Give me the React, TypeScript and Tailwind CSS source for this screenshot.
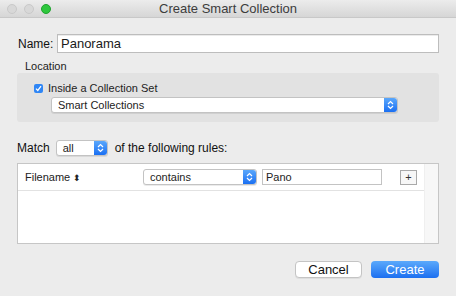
import React from "react";

function Stepper({ className = "" }: { className?: string }) {
  return (
    <div
      className={
        "flex h-full w-[13px] items-center justify-center rounded-r-[3px] bg-gradient-to-b from-[#5aa7fb] to-[#1a6ff2] " +
        className
      }
    >
      <svg width="7" height="10" viewBox="0 0 7 10" fill="none">
        <path d="M1 4 L3.5 1.5 L6 4" stroke="white" strokeWidth="1.2" />
        <path d="M1 6 L3.5 8.5 L6 6" stroke="white" strokeWidth="1.2" />
      </svg>
    </div>
  );
}

function Select({ label, width, height = 16 }: { label: string; width: string; height?: number }) {
  return (
    <div
      className={`flex items-stretch rounded-[3px] border border-[#c3c3c3] bg-white shadow-[0_1px_0_rgba(0,0,0,0.08)] ${width}`}
      style={{ height }}
    >
      <div className="flex flex-1 items-center pl-[6px] text-[11px] text-[#222]">{label}</div>
      <Stepper />
    </div>
  );
}

export default function App() {
  return (
    <div
      className="flex h-[296px] w-[456px] flex-col overflow-hidden bg-[#ececec] text-[#1a1a1a]"
      style={{ fontFamily: '"Liberation Sans", Arial, sans-serif' }}
    >
      {/* Title bar */}
      <div className="relative flex h-[18px] items-center justify-center border-b border-[#c8c8c8] bg-gradient-to-b from-[#ececec] to-[#d6d6d6]">
        <div className="absolute left-[7px] top-[4px] flex gap-[7px]">
          <div className="h-[10px] w-[10px] rounded-full border border-[#c9c9c9] bg-[#d8d8d8]" />
          <div className="h-[10px] w-[10px] rounded-full border border-[#c9c9c9] bg-[#d8d8d8]" />
          <div className="h-[10px] w-[10px] rounded-full border border-[#1fa32e] bg-[#2ec73d]" />
        </div>
        <span className="text-[13px] text-[#3c3c3c]">Create Smart Collection</span>
      </div>

      <div className="flex flex-1 flex-col px-[17px]">
        {/* Name */}
        <div className="mt-[16px] flex h-[19px] items-center">
          <span className="w-[40px] pl-[1px] text-[12px] text-[#111]">Name:</span>
          <div className="flex h-[19px] flex-1 items-center border border-[#bdbdbd] bg-white pl-[3px] text-[13px] shadow-[inset_0_1px_0_rgba(0,0,0,0.08)]">
            Panorama
          </div>
        </div>

        {/* Location */}
        <div className="mt-[8px] pl-[8px] text-[11px] leading-[11px] text-[#222]">Location</div>
        <div className="mt-[1px] flex h-[49px] flex-col rounded-[3px] bg-[#e2e2e2] pl-[17px] pt-[9px]">
          <div className="flex h-[13px] items-center gap-[5px]">
            <div className="flex h-[9px] w-[9px] items-center justify-center rounded-[2px] bg-[#2f86f5]">
              <svg width="7" height="7" viewBox="0 0 7 7" fill="none">
                <path d="M1 3.6 L2.8 5.4 L6 1.2" stroke="white" strokeWidth="1.3" />
              </svg>
            </div>
            <span className="text-[11px] leading-[13px] text-[#222]">Inside a Collection Set</span>
          </div>
          <div className="mt-[2px] pl-[17px]">
            <Select label="Smart Collections" width="w-[347px]" />
          </div>
        </div>

        {/* Match row */}
        <div className="mt-[18px] flex h-[16px] items-center">
          <span className="text-[12px] text-[#111]">Match</span>
          <div className="ml-[6px]">
            <Select label="all" width="w-[52px]" />
          </div>
          <span className="ml-[7px] text-[12px] text-[#111]">of the following rules:</span>
        </div>

        {/* Rules table */}
        <div className="mt-[7px] flex h-[81px] border border-[#c6c6c6] bg-white">
          <div className="flex flex-1 flex-col">
            <div className="flex h-[27px] items-center border-b border-[#e2e2e2] pl-[7px]">
              <span className="w-[118px] text-[11px] text-[#222]">
                Filename <span className="text-[9px]">⬍</span>
              </span>
              <Select label="contains" width="w-[114px]" />
              <div className="ml-[5px] flex h-[16px] w-[120px] items-center border border-[#c3c3c3] pl-[3px] text-[11px] text-[#222]">
                Pano
              </div>
              <div className="ml-[18px] flex h-[15px] w-[17px] items-center justify-center border border-[#a9a9a9] bg-[#f7f7f7] text-[11px] leading-none text-[#333]">
                +
              </div>
            </div>
          </div>
          <div className="w-[14px] border-l border-[#efefef] bg-[#f7f7f7]" />
        </div>

        {/* Buttons */}
        <div className="mt-[17px] flex justify-end gap-[9px]">
          <div className="flex h-[17px] w-[67px] items-center justify-center rounded-[4px] border border-[#c4c4c4] bg-white text-[13px] text-[#111] shadow-[0_1px_0_rgba(0,0,0,0.06)]">
            Cancel
          </div>
          <div className="flex h-[17px] w-[68px] items-center justify-center rounded-[4px] bg-gradient-to-b from-[#5ba9fb] to-[#1c6ff0] text-[13px] text-white">
            Create
          </div>
        </div>
      </div>
    </div>
  );
}
